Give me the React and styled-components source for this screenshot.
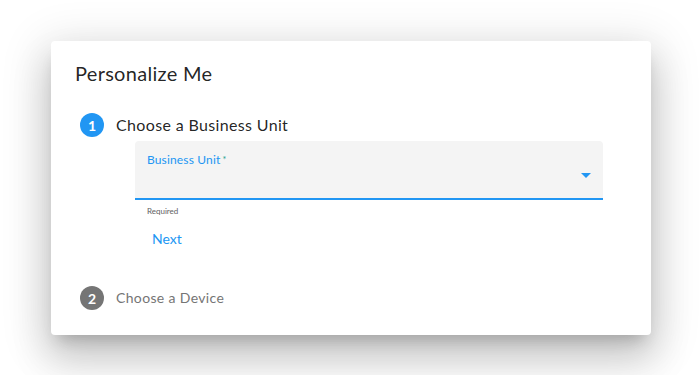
import React from "react";
import styled, { createGlobalStyle } from "styled-components";

const Global = createGlobalStyle`
  html, body { margin: 0; padding: 0; background: #ffffff; }
  body { font-family: Lato, "Open Sans", Arial, sans-serif; -webkit-font-smoothing: antialiased; }
  * { box-sizing: border-box; }
`;

const Page = styled.div`
  width: 700px;
  height: 375px;
  padding: 41px 0 0 51px;
  overflow: hidden;
`;

const Card = styled.div`
  width: 600px;
  height: 294px;
  background: #fff;
  border-radius: 4px;
  box-shadow: 0px 11px 15px -7px rgba(0,0,0,0.2), 0px 24px 38px 3px rgba(0,0,0,0.14), 0px 9px 46px 8px rgba(0,0,0,0.12);
  padding: 16px 24px 25px 24px;
  display: flex;
  flex-direction: column;
`;

const Title = styled.h2`
  margin: 0;
  font-size: 20px;
  line-height: 32px;
  font-weight: 400;
  letter-spacing: 0.3px;
  color: rgba(0,0,0,0.87);
`;

const Stepper = styled.div`
  margin-top: 24px;
  padding: 0 24px 0 5px;
  display: flex;
  flex-direction: column;
`;

const StepRow = styled.div`
  display: flex;
  align-items: center;
  height: 24px;
  gap: 12px;
  margin-top: ${p => p.$gap || 0}px;
`;

const StepIcon = styled.div`
  width: 24px;
  height: 24px;
  border-radius: 50%;
  background: ${p => (p.$active ? "#2196f3" : "#757575")};
  color: #fff;
  font-size: 14px;
  font-weight: 700;
  display: flex;
  align-items: center;
  justify-content: center;
  flex-shrink: 0;
`;

const StepLabel = styled.span`
  font-size: ${p => (p.$active ? 16 : 14)}px;
  line-height: 1.2;
  letter-spacing: 0.35px;
  color: ${p => (p.$active ? "rgba(0,0,0,0.87)" : "#757575")};
`;

const StepContent = styled.div`
  margin-left: 55px;
  display: flex;
  flex-direction: column;
  align-items: flex-start;
`;

const SelectBox = styled.div`
  margin-top: 4px;
  width: 100%;
  height: 59px;
  background: #f4f4f4;
  border-radius: 4px 4px 0 0;
  border-bottom: 2px solid #2196f3;
  display: flex;
  justify-content: space-between;
  align-items: flex-start;
  padding: 12px 12px 0 12px;
`;

const FieldLabel = styled.label`
  font-size: 12px;
  line-height: 14px;
  letter-spacing: 0.15px;
  color: #2196f3;
`;

const Asterisk = styled.span`
  color: #1f9e8c;
  font-size: 9px;
  vertical-align: top;
  margin-left: 2px;
`;

const Arrow = styled.svg`
  margin-top: 20px;
  display: block;
`;

const Helper = styled.div`
  margin-top: 6px;
  padding-left: 12px;
  font-size: 8px;
  line-height: 10px;
  color: #616161;
`;

const TextButton = styled.button`
  margin-top: 5px;
  margin-left: 1px;
  background: none;
  border: none;
  padding: 6px 16px;
  font-family: inherit;
  font-size: 14px;
  line-height: 24px;
  color: #2196f3;
  cursor: pointer;
  border-radius: 4px;
`;

export default function App() {
  return (
    <>
      <Global />
      <Page>
        <Card>
          <Title>Personalize Me</Title>
          <Stepper>
            <StepRow>
              <StepIcon $active>1</StepIcon>
              <StepLabel $active>Choose a Business Unit</StepLabel>
            </StepRow>
            <StepContent>
              <SelectBox>
                <FieldLabel>
                  Business Unit<Asterisk>*</Asterisk>
                </FieldLabel>
                <Arrow width="10" height="5" viewBox="0 0 10 5">
                  <path d="M0 0 L10 0 L5 5 Z" fill="#2196f3" />
                </Arrow>
              </SelectBox>
              <Helper>Required</Helper>
              <TextButton>Next</TextButton>
            </StepContent>
            <StepRow $gap={29}>
              <StepIcon>2</StepIcon>
              <StepLabel>Choose a Device</StepLabel>
            </StepRow>
          </Stepper>
        </Card>
      </Page>
    </>
  );
}
